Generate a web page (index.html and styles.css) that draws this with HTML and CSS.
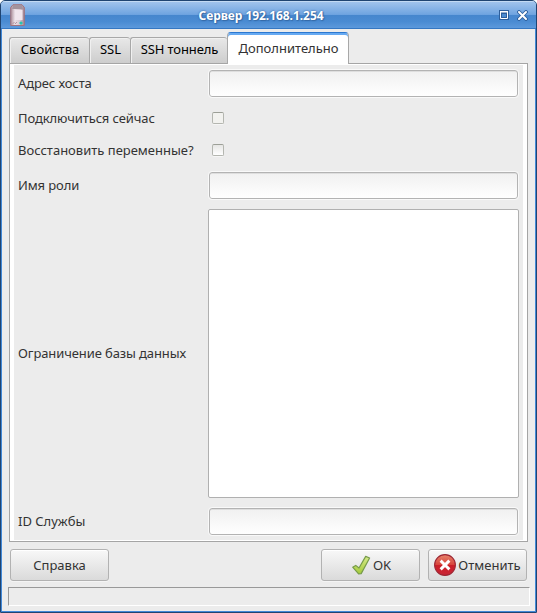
FILE: index.html
```html
<!DOCTYPE html>
<html lang="ru">
<head>
<meta charset="utf-8">
<title>Сервер 192.168.1.254</title>
<link rel="stylesheet" href="styles.css">
</head>
<body>
<div class="window">
  <header class="titlebar">
    <svg class="app-icon" width="15" height="23" viewBox="0 0 15 23">
      <defs><linearGradient id="srv" x1="0" x2="1" y1="0" y2="0"><stop offset="0" stop-color="#a98c98"/><stop offset=".3" stop-color="#eadfe6"/><stop offset=".7" stop-color="#d5c5cf"/><stop offset="1" stop-color="#a08592"/></linearGradient></defs>
      <path d="M.7 3.5 3 .7h9l2.3 2.8v18H.7z" fill="url(#srv)" stroke="#a1737e" stroke-width="1"/>
      <path d="M3 1h9l1 4H2z" fill="#a3939d"/>
      <path d="M5 6h7.5v10H5z" fill="#f1e6ed"/>
      <path d="M2.5 20l2-2M5 20l2-2" stroke="#b092a0" fill="none"/>
      <path d="M9 19l2-1.8 2 1.8-2 2z" fill="#27c5b1"/>
    </svg>
    <h1 class="title">Сервер 192.168.1.254</h1>
    <div class="controls">
      <svg width="10" height="10" viewBox="0 0 10 10"><path d="M0 0h10v10H0z" fill="#2e5f9c"/><path d="M1.5 2h7v6.5h-7z" fill="none" stroke="#fff"/><path d="M1 1.5h8" stroke="#fff"/><path d="M2.5 3.5h5v4h-5z" fill="#4c8bd0" stroke="#2e5f9c"/></svg>
      <svg width="11" height="11" viewBox="0 0 11 11"><path d="M2 2l7 7M9 2L2 9" stroke="#2e5f9c" stroke-width="3.8" stroke-linecap="round"/><path d="M2 2l7 7M9 2L2 9" stroke="#fff" stroke-width="2" stroke-linecap="round"/></svg>
    </div>
  </header>
  <nav class="tabs">
    <div class="tab tab-props"><span>Свойства</span></div>
    <div class="tab tab-ssl"><span>SSL</span></div>
    <div class="tab tab-ssh"><span>SSH тоннель</span></div>
    <div class="tab tab-active"><span>Дополнительно</span></div>
  </nav>
  <main class="panel">
    <label class="label snug raised" for="host">Адрес хоста</label><input class="field" id="host" type="text">
    <label class="label snug" for="now">Подключиться сейчас</label><input class="check check-off" id="now" type="checkbox">
    <label class="label" for="restore">Восстановить переменные?</label><input class="check" id="restore" type="checkbox">
    <label class="label snug raised" for="role">Имя роли</label><input class="field" id="role" type="text">
    <label class="label snug raised" for="restrict">Ограничение базы данных</label><textarea class="area" id="restrict"></textarea>
    <label class="label" for="service">ID Службы</label><input class="field" id="service" type="text">
  </main>
  <div class="actions">
    <button class="button help">Справка</button>
    <button class="button ok">
      <svg width="20" height="20" viewBox="0 0 20 20"><defs><linearGradient id="chk" x1="0" x2="0" y1="0" y2="1"><stop offset="0" stop-color="#d6ea8a"/><stop offset="1" stop-color="#a4ca3a"/></linearGradient></defs><path d="M1.7 12.2 4.7 10.4 8 13 14.7 1.4 18.6 3 10.2 18.6 7.6 18.9z" fill="url(#chk)" stroke="#779b4a" stroke-width="1.2" stroke-linejoin="round"/></svg>
      <span>OK</span>
    </button>
    <button class="button cancel">
      <svg width="22" height="22" viewBox="0 0 22 22"><defs><linearGradient id="red" x1="0" x2="0" y1="0" y2="1"><stop offset="0" stop-color="#e7846c"/><stop offset=".48" stop-color="#d8453c"/><stop offset=".52" stop-color="#cb1f28"/><stop offset="1" stop-color="#c92435"/></linearGradient></defs><circle cx="11" cy="11" r="10.4" fill="url(#red)" stroke="#9c2532" stroke-width="1.1"/><path d="M7.7 7.7l6.6 6.6M14.3 7.7l-6.6 6.6" stroke="#fff" stroke-width="3" stroke-linecap="square"/></svg>
      <span>Отменить</span>
    </button>
  </div>
  <footer class="status"></footer>
</div>
</body>
</html>
```
FILE: styles.css
```css
* { box-sizing: border-box; }
body {
  margin: 0;
  background: #fff;
  font: 13px/18px "Noto Sans", sans-serif;
  color: #333;
}
.window {
  width: 537px;
  height: 613px;
  display: flex;
  flex-direction: column;
  background: #ececec;
  border: 1px solid #1f4471;
  border-radius: 5px 5px 0 0;
  box-shadow: inset 0 0 0 1px #4289d8;
  padding: 0 1px 1px;
  overflow: hidden;
}
.titlebar {
  height: 28px;
  flex: none;
  margin: 0 -1px;
  display: grid;
  grid-template-columns: 25px 1fr 40px;
  align-items: center;
  border-top: 1px solid #c3daf3;
  border-bottom: 1px solid #3577c2;
  background: linear-gradient(#a0c3ec 0, #6fa4e0 48%, #4686cd 50%, #4a8bd2 75%, #5c99dc 100%);
}
.app-icon { margin-left: 9px; }
.title {
  margin: 0;
  padding-top: 1px;
  text-align: center;
  font: bold 12px/18px "Noto Sans", sans-serif;
  letter-spacing: -0.05px;
  color: #fff;
  text-shadow: 0 0 2px #285a96, 1px 1px 1px #3a6fac;
}
.controls { display: flex; gap: 8px; align-items: center; margin-left: 3px; }
.tabs {
  height: 35px;
  flex: none;
  display: flex;
  align-items: flex-end;
  padding-left: 7px;
  position: relative;
  z-index: 1;
}
.tab {
  height: 26px;
  margin-bottom: 1px;
  padding: 0 0 3px 1px;
  display: flex;
  justify-content: center;
  align-items: center;
  border: 1px solid #a8a8a8;
  border-right: 0;
  border-bottom: 0;
  border-radius: 3px 3px 0 0;
  background: linear-gradient(#e8e8e8, #cdcdcd);
  box-shadow: inset 1px 1px #f0f0f0;
  color: #000;
  white-space: nowrap;
}
.tab-props { width: 80px; }
.tab-ssl { width: 41px; }
.tab-ssh { width: 97px; letter-spacing: -0.1px; }
.tab-active {
  width: 122px;
  height: 32px;
  margin-bottom: 0;
  padding: 0 0 2px 1px;
  border: 1px solid #a8a8a8;
  border-top: 1px solid #2c78d0;
  border-bottom: 0;
  border-radius: 4px 4px 0 0;
  background: #fff;
  box-shadow: inset 0 2px #67aaf2;
  color: #333;
}
.panel {
  width: 519px;
  height: 479px;
  flex: none;
  margin: -1px 0 0 7px;
  padding: 1px 4px 0 8px;
  display: grid;
  grid-template-columns: 190px 311px;
  grid-template-rows: 37px 32px 32px 39px 297px 38px;
  align-items: center;
  border: 1px solid #a5a5a5;
  background: #ececec;
  box-shadow: inset 4px 1px #fff, inset -4px -1px #fff;
}
.label { white-space: nowrap; }
.snug { letter-spacing: -0.1px; }
.raised { padding-bottom: 2px; }
.field, .area {
  width: 311px;
  margin: 0;
  outline: 0;
  border: 1px solid #b0b0b0;
}
.field {
  height: 29px;
  border: 1px solid #f9f9f9;
  border-radius: 4px;
  padding: 0;
  background: linear-gradient(#f0f0f0, #fff) padding-box;
  box-shadow: inset 0 0 0 1px #b3b3b3, inset 0 2px #dedede;
}
.area {
  height: 289px;
  display: block;
  resize: none;
  border-radius: 2px;
  background: #fff;
}
.check {
  appearance: none;
  width: 12px;
  height: 12px;
  margin: 0 0 0 4px;
  border: 1px solid #b4b6b0;
  border-top-color: #9c9f97;
  border-radius: 2px;
  background: linear-gradient(#e6e6e4, #fff);
  box-shadow: 0 1px #f6f6f6;
}
.check-off { background: #f2f2ef; }
.actions {
  display: flex;
  height: 32px;
  flex: none;
  margin: 7px 8px 0;
}
.button {
  width: 99px;
  height: 32px;
  padding: 0 0 1px;
  display: flex;
  justify-content: center;
  align-items: center;
  font: inherit;
  color: #333;
  border: 1px solid #b2b2b2;
  border-radius: 3px;
  background: linear-gradient(#f8f8f8, #dadada);
  box-shadow: 0 1px #f4f4f4, inset 0 1px #fff;
}
.button svg { margin-top: 1px; }
.ok { margin-left: auto; gap: 2px; padding-left: 1px; }
.cancel { margin-left: 8px; gap: 2px; }
.status {
  width: 522px;
  height: 19px;
  flex: none;
  margin: 6px 0 0 6px;
  border: 1px solid #999;
  border-right-color: #fff;
  border-bottom-color: #fff;
}
```
